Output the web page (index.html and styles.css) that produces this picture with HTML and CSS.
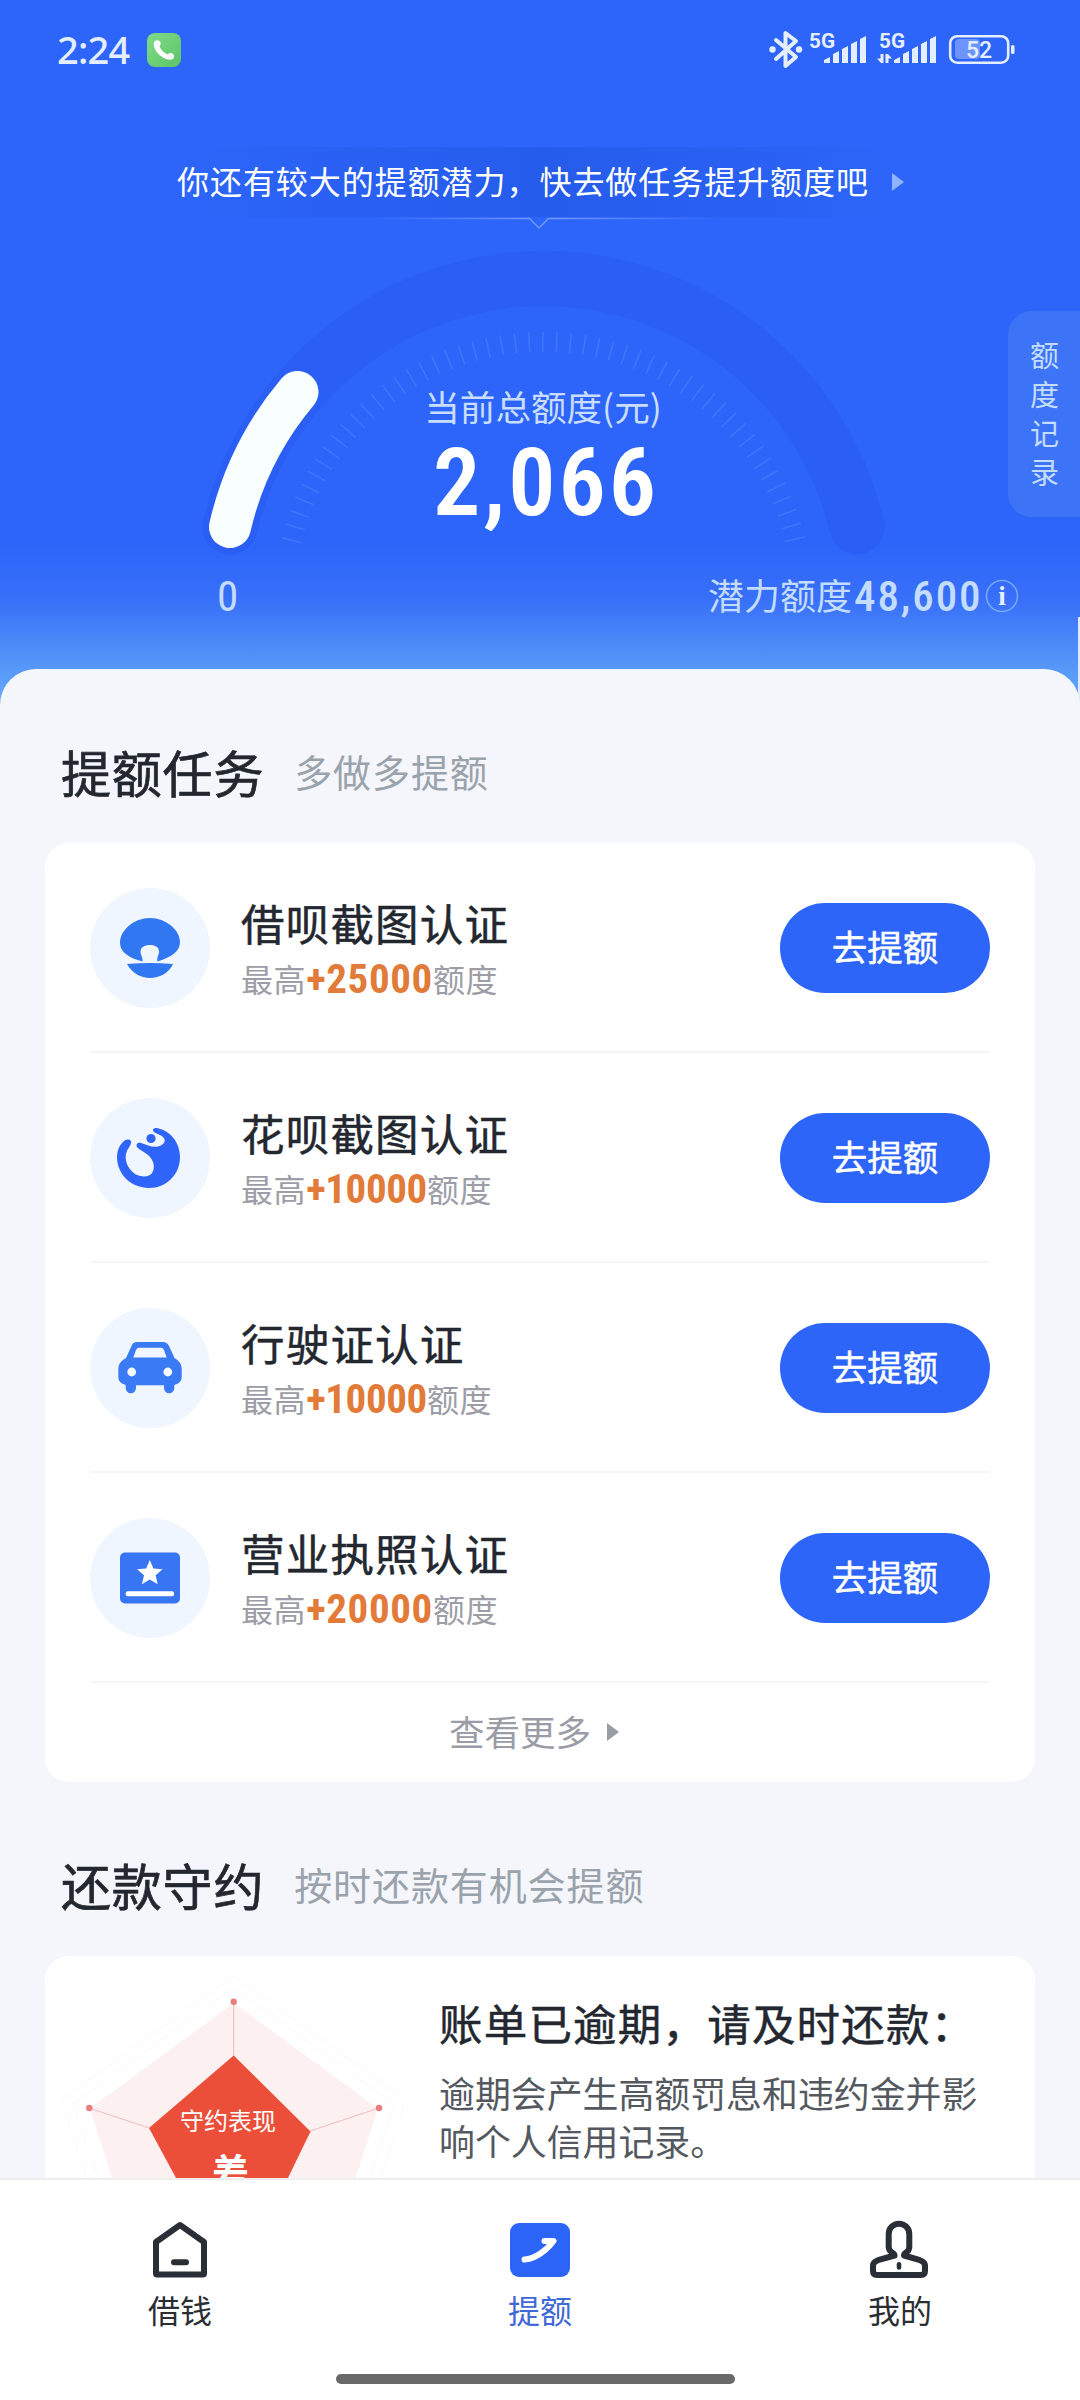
FILE: index.html
```html
<!DOCTYPE html>
<html lang="zh-CN">
<head>
    <meta charset="UTF-8">
    <meta name="viewport" content="width=device-width, initial-scale=1.0">
    <title>提额</title>
    <link rel="stylesheet" href="styles.css">
</head>
<body>
    <div class="content">
        <header class="hero">
            <div class="statusbar">
                <span class="time">2:24</span>
                <svg class="call" viewBox="0 0 34 34">
                    <defs>
                        <linearGradient id="green" x1="0" y1="0" x2="1" y2="1">
                            <stop offset="0" stop-color="#7fdc8a"/>
                            <stop offset="1" stop-color="#5cc466"/>
                        </linearGradient>
                    </defs>
                    <rect width="34" height="34" rx="8" fill="url(#green)"/>
                    <path d="M7 9 C8 7 11 6.500 13 8.500 C14.500 11 13 12.500 12.500 13.500 C14 17 17 20 20.500 21.500 C22 20 24 19.500 26 21 C28 22.500 27 25.500 25 26.500 C16 28 5 17 7 9Z" fill="#fff"/>
                </svg>
                <svg class="signals" viewBox="0 0 250 40">
                    <g fill="none" stroke="#e4eeff" stroke-width="4" stroke-linejoin="round" stroke-linecap="round">
                        <path d="M8 11 L28 28 L17.500 37 V4 L28 12 L8 30"/>
                    </g>
                    <g fill="#e4eeff">
                        <circle cx="4.500" cy="20.500" r="3.200"/>
                        <circle cx="31" cy="20.500" r="3.200"/>
                        <text class="net" x="41" y="19" textLength="26" lengthAdjust="spacingAndGlyphs">5G</text>
                        <path d="M56 34 V31 L62 28 V34Z M65 34 V25 L71 22 V34Z M74 34 V20 L80 17 V34Z M83 34 V15 L89 12 V34Z M92 34 V10 L98 7 V34Z"/>
                        <text class="net" x="111" y="19" textLength="26" lengthAdjust="spacingAndGlyphs">5G</text>
                        <path d="M126 34 V31 L132 28 V34Z M135 34 V25 L141 22 V34Z M144 34 V20 L150 17 V34Z M153 34 V15 L159 12 V34Z M162 34 V10 L168 7 V34Z"/>
                        <path d="M112.500 25 H115.500 V34 H113 L109 29.500 H112.500Z M117.500 25 H120 L124 29.500 H120.500 V34 H117.500Z"/>
                        <rect x="187" y="10" width="25" height="20" rx="4" opacity=".35"/>
                        <rect x="243" y="16" width="3.500" height="9" rx="1.500"/>
                        <text class="level" x="198" y="29">52</text>
                    </g>
                    <rect x="182.200" y="7.200" width="58" height="26.500" rx="7" fill="none" stroke="#e4eeff" stroke-width="2.600"/>
                </svg>
            </div>

            <div class="tip">
                <span>你还有较大的提额潜力，快去做任务提升额度吧</span>
                <i class="arrow"></i>
            </div>

            <svg class="gauge" viewBox="0 217 1080 343">
                <defs>
                    <linearGradient id="fade" gradientUnits="userSpaceOnUse" x1="370" y1="0" x2="720" y2="0">
                        <stop offset="0" stop-color="#8fb4ff" stop-opacity="0"/>
                        <stop offset=".5" stop-color="#8fb4ff" stop-opacity=".7"/>
                        <stop offset="1" stop-color="#8fb4ff" stop-opacity="0"/>
                    </linearGradient>
                </defs>
                <path d="M370 218.500 H529.500 L539 228 L548.500 218.500 H720" fill="none" stroke="url(#fade)" stroke-width="1.300"/>
                <path class="track" d="M230 527 A322 322 0 0 1 857 527"/>
                <path class="ticks" d="M291.500 541 A259 259 0 0 1 795.500 541"/>
                <path class="value" d="M230 527 A322 322 0 0 1 297.500 392"/>
                <text class="gauge-label" x="543" y="421" text-anchor="middle">当前总额度(元)</text>
                <text class="gauge-number" x="433" y="515" textLength="223" lengthAdjust="spacing">2,066</text>
            </svg>

            <div class="range">
                <span class="zero">0</span>
                <span class="potential">潜力额度</span>
                <span class="amount">48,600</span>
                <svg class="info" viewBox="0 0 34 34">
                    <circle cx="17" cy="17" r="15.500" fill="none" stroke="#78a8fb" stroke-width="1.600"/>
                    <text x="17" y="26" text-anchor="middle">i</text>
                </svg>
            </div>

            <div class="history">额度记录</div>
            <div class="scroll-edge"></div>
        </header>

        <main class="panel">
            <h2>提额任务<small>多做多提额</small></h2>
            <section class="card">
                <div class="task">
                    <svg class="task-icon" viewBox="0 0 120 120" fill="#3277f2">
                        <circle class="disc" cx="60" cy="60" r="60"/>
                        <path d="M30 55 C30 42 44 30 60 30 C76 30 90 42 90 54 C90 63 82 69 67.500 73.500 C66.500 69 69 67 69 64 C69 59 65.500 57 60 57 C54.500 57 50.500 59 50.500 64 C50.500 67 53 69 52.500 73.500 C39 70 30 64 30 55Z"/>
                        <path d="M37 76 Q60 74 83 76 C79 85 69 90 60 90 C51 90 42 85 37 76Z"/>
                    </svg>
                    <div class="task-text">
                        <h3>借呗截图认证</h3>
                        <p>最高<b>+25000</b>额度</p>
                    </div>
                    <button>去提额</button>
                </div>
                <div class="task">
                    <svg class="task-icon" viewBox="0 0 120 120" fill="#2e64fa">
                        <circle class="disc" cx="60" cy="60" r="60"/>
                        <path d="M32 45 C35 41 40 40.500 41 43.500 C41.500 46 39 49 37 53 C33 62 39 73 47 77 C53 79.500 60 78.500 62 75 C65.500 70 64 62 58 57 C55 54 49 52 47 49 C45.500 46 48 44 51 45 C57 47 62 49.500 68 48.500 C73 47.500 75.500 44 74.500 41 C73 37 66 36 63.500 33.500 C62 31 64 29.800 67 30 C81 33 90 45 90 59 C90 77 76 90 59 90 C41 90 27 76 27 59 C27 53 29 48.500 32 45Z"/>
                        <circle cx="61" cy="40.500" r="4.600"/>
                    </svg>
                    <div class="task-text">
                        <h3>花呗截图认证</h3>
                        <p>最高<b class="tight">+10000</b>额度</p>
                    </div>
                    <button>去提额</button>
                </div>
                <div class="task">
                    <svg class="task-icon" viewBox="0 0 120 120" fill="#3a7af5">
                        <circle class="disc" cx="60" cy="60" r="60"/>
                        <path fill-rule="evenodd" d="M47 34 H73 Q77 34 79 38 L84.500 50 Q91.700 54 91.700 61 V69 Q91.700 75 84.300 77 V80 A5.100 5.100 0 0 1 74 80 V77.300 H46 V80 A5.100 5.100 0 0 1 35.700 80 V77 Q28.300 75 28.300 69 V61 Q28.300 54 36 50 L41.500 38 Q43 34 47 34Z M49 39.800 Q47 39.800 46 42 L43.300 49.500 H76.700 L74 42 Q73 39.800 71 39.800Z"/>
                        <circle cx="41.700" cy="64" r="4.400" fill="#f5faff"/>
                        <circle cx="77.800" cy="64" r="4.400" fill="#f5faff"/>
                    </svg>
                    <div class="task-text">
                        <h3>行驶证认证</h3>
                        <p>最高<b class="tight">+10000</b>额度</p>
                    </div>
                    <button>去提额</button>
                </div>
                <div class="task">
                    <svg class="task-icon" viewBox="0 0 120 120" fill="#3875f2">
                        <circle class="disc" cx="60" cy="60" r="60"/>
                        <rect x="30" y="34.500" width="60" height="51" rx="5"/>
                        <path fill="#fff" d="M59.800 42 L63.400 50.500 L72.500 51.300 L65.600 57.300 L67.700 66.300 L59.800 61.500 L51.900 66.300 L54 57.300 L47.100 51.300 L56.200 50.500Z"/>
                        <rect x="35.700" y="73.200" width="48.300" height="5" rx="2" fill="#fff"/>
                    </svg>
                    <div class="task-text">
                        <h3>营业执照认证</h3>
                        <p>最高<b>+20000</b>额度</p>
                    </div>
                    <button>去提额</button>
                </div>
                <div class="more">查看更多<i class="arrow"></i></div>
            </section>

            <h2>还款守约<small>按时还款有机会提额</small></h2>
            <section class="card credit">
                <svg class="radar" viewBox="0 0 360 360">
                    <g fill="none" stroke="#fefafa" stroke-width="1.500">
                        <path d="M188.700 32 L349 148 L288 332 H90 L28 148Z"/>
                        <path d="M188.700 20 L361 144 L296 342 H82 L16 144Z"/>
                    </g>
                    <path d="M188.700 47 L333 152.500 L278 322 H99 L45 152.500Z" fill="#fdf0f0"/>
                    <path d="M188.700 46 V100 M44.300 152 L104 172 M334 152 L265 175" stroke="#f0bcbc" stroke-width="1" fill="none"/>
                    <path d="M188.700 99.500 L265.500 175.500 L226 257 H150 L104 172Z" fill="#eb4f3a"/>
                    <g fill="#e87f7f">
                        <circle cx="188.700" cy="45.700" r="3.200"/>
                        <circle cx="44.300" cy="152" r="3.200"/>
                        <circle cx="334" cy="152" r="3.200"/>
                    </g>
                    <text class="radar-label" x="183" y="174" text-anchor="middle">守约表现</text>
                    <text class="radar-grade" x="185.500" y="230" text-anchor="middle">差</text>
                </svg>
                <div class="credit-text">
                    <h3>账单已逾期，请及时还款：</h3>
                    <p>逾期会产生高额罚息和违约金并影响个人信用记录。</p>
                </div>
            </section>
        </main>
    </div>

    <nav class="tabbar">
        <a class="tab">
            <svg viewBox="0 0 60 60" fill="none" stroke="#2a2e36" stroke-width="6" stroke-linejoin="round" stroke-linecap="round">
                <path d="M30 5 L54 22 V53.500 Q54 54.500 53 54.500 H7 Q6 54.500 6 53.500 V22Z"/>
                <path d="M24 42.300 H36"/>
            </svg>
            借钱
        </a>
        <a class="tab active">
            <svg viewBox="0 0 60 60">
                <rect y="3" width="60" height="54" rx="9" fill="#2d64f8"/>
                <path d="M14.500 39.500 C25 39 36 31 43.500 21 H34.500" fill="none" stroke="#fff" stroke-width="6" stroke-linecap="round" stroke-linejoin="round"/>
            </svg>
            提额
        </a>
        <a class="tab">
            <svg viewBox="0 0 60 60" fill="none" stroke="#2a2e36" stroke-width="6" stroke-linejoin="round" stroke-linecap="round">
                <path d="M24.500 35.500 C25 32.500 18.700 33 18.700 27 V14 A10.300 10.300 0 0 1 39.300 14 V27 C39.300 33 33.500 32.500 34 35.500 L50 40.200 Q55 42 55 45.500 V51 Q55 55 51 55 H7 Q3 55 3 51 V45.500 Q3 42 8 40.200 L24.500 35.500"/>
                <path d="M29 44.300 V47.500" stroke-width="4.500"/>
            </svg>
            我的
        </a>
        <div class="home-bar"></div>
    </nav>
</body>
</html>
```
FILE: styles.css
```css
* {
    box-sizing: border-box;
    margin: 0;
    padding: 0;
}
body {
    width: 1080px;
    height: 2400px;
    overflow: hidden;
    display: flex;
    flex-direction: column;
    font-family: "Noto Sans CJK SC", sans-serif;
    background: #fff;
    color: #23272f;
}
svg {
    display: block;
    flex: none;
}
.content {
    flex: 1;
    min-height: 0;
    overflow: hidden;
}

/* blue top area */
.hero {
    position: relative;
    height: 710px;
    background: linear-gradient(#2d65fa 0, #2d65fa 545px, #3870f8 600px, #4a88f8 640px, #5698f8 668px, #66aefc 710px);
}
.statusbar {
    display: flex;
    align-items: center;
    height: 100px;
    padding: 0 62px 0 57px;
    color: #e4eeff;
}
.time {
    font: 500 38px/40px "Noto Sans", sans-serif;
    letter-spacing: -0.8px;
    width: 90px;
    margin-top: -2px;
}
.call {
    width: 34px;
    height: 34px;
}
.signals {
    width: 250px;
    height: 40px;
    margin-left: auto;
    margin-top: -2px;
}
.net {
    font: 700 20px Roboto, sans-serif;
}
.level {
    font: 500 23px Roboto, sans-serif;
}
.tip {
    display: flex;
    align-items: center;
    width: 734px;
    height: 70px;
    margin: 47px 0 0 177px;
    background: linear-gradient(90deg, rgba(35, 88, 228, 0), rgba(35, 88, 228, .7) 50%, rgba(35, 88, 228, 0));
    color: #fff;
    font-size: 32px;
    letter-spacing: 0.95px;
    white-space: nowrap;
}
.tip span {
    padding-bottom: 4px;
}
.arrow {
    width: 0;
    height: 0;
    border: 9px solid transparent;
    border-left: 12px solid currentColor;
    border-right: 0;
}
.tip .arrow {
    margin-left: 23px;
    color: #8fb3fd;
}
.gauge {
    width: 1080px;
    height: 343px;
}
.track {
    fill: none;
    stroke: #2a5ef4;
    stroke-width: 55;
    stroke-linecap: round;
}
.ticks {
    fill: none;
    stroke: #4b7ffb;
    stroke-width: 20;
    stroke-dasharray: 1.6 12.2;
    opacity: .6;
}
.value {
    fill: none;
    stroke: #f8fffe;
    stroke-width: 42;
    stroke-linecap: round;
}
.gauge-label {
    font-size: 35.6px;
    fill: #c8ddff;
}
.gauge-number {
    font: 600 94px Roboto, sans-serif;
    font-stretch: 75%;
    fill: #fff;
}
.range {
    display: flex;
    align-items: center;
    height: 72px;
    padding: 0 61px 0 217px;
    color: #c3dcff;
}
.zero {
    font: 400 43px/44px Roboto, sans-serif;
    font-stretch: 75%;
    margin-right: auto;
}
.potential {
    font-size: 36px;
    line-height: 44px;
    margin-top: -4px;
    margin-right: 2px;
}
.amount {
    font: 500 43px/44px Roboto, sans-serif;
    font-stretch: 75%;
    letter-spacing: 1.9px;
    width: 126px;
}
.info {
    width: 34px;
    height: 34px;
    margin-left: 5px;
}
.info text {
    font: 700 27px "Liberation Serif", serif;
    fill: #e6f0ff;
}
.history {
    position: absolute;
    top: 311px;
    right: 0;
    width: 72px;
    height: 206px;
    padding: 24px 20px 0 22px;
    border-radius: 24px 0 0 24px;
    background: #3d74f7;
    color: #c3dcff;
    font-size: 29px;
    line-height: 39px;
}
.scroll-edge {
    position: absolute;
    top: 617px;
    right: 0;
    width: 2px;
    height: 90px;
    background: #dfe9fb;
}

/* content sheet */
.panel {
    position: relative;
    margin-top: -41px;
    height: 1600px;
    padding: 38px 45px 0;
    border-radius: 36px 36px 0 0;
    background: #f4f6fb;
}
h2 {
    display: flex;
    align-items: center;
    height: 136px;
    padding-left: 16px;
    padding-bottom: 8px;
    font-size: 50px;
    font-weight: 400;
    letter-spacing: 0.8px;
    line-height: 60px;
    -webkit-text-stroke: 0.7px currentColor;
}
h2 small {
    margin-left: 30px;
    font-size: 38px;
    letter-spacing: 0.9px;
    color: #9aa2ac;
    -webkit-text-stroke: 0;
}
.card {
    padding: 0 45px;
    border-radius: 24px;
    background: #fff;
}
.task {
    display: flex;
    align-items: center;
    height: 210px;
    padding-top: 2px;
    border-bottom: 2px solid #f4f5f6;
}
.task-icon {
    width: 120px;
    height: 120px;
}
.disc {
    fill: #eff6ff;
}
.task-text {
    flex: 1;
    padding: 6px 0 0 31px;
}
h3 {
    font-size: 43.5px;
    font-weight: 400;
    line-height: 54px;
    letter-spacing: 1.2px;
    white-space: nowrap;
    -webkit-text-stroke: 0.5px currentColor;
}
.task p {
    display: flex;
    align-items: center;
    height: 56px;
    font-size: 32px;
    letter-spacing: 0.6px;
    color: #9c9da6;
}
.task b {
    font: 700 41px/56px Roboto, sans-serif;
    font-stretch: 75%;
    letter-spacing: 0.6px;
    padding: 2px 0 0 0;
    color: #e27a38;
}
.task .tight {
    letter-spacing: -0.4px;
}
.task button {
    width: 210px;
    height: 90px;
    padding-bottom: 5px;
    border: none;
    border-radius: 45px;
    background: #2d65f8;
    color: #fff;
    font-family: inherit;
    font-size: 35.5px;
    -webkit-text-stroke: 0.5px currentColor;
    cursor: pointer;
}
.more {
    display: flex;
    align-items: center;
    justify-content: center;
    height: 99px;
    padding: 0 12px 4px 0;
    font-size: 35.5px;
    color: #9a9ca6;
}
.more .arrow {
    margin-left: 16px;
    margin-top: 2px;
}
.card + h2 {
    margin-top: 38px;
}
.credit {
    display: flex;
    height: 400px;
    padding: 0;
}
.radar {
    width: 360px;
    height: 360px;
}
.radar-label {
    font-size: 24px;
    fill: #fff;
}
.radar-grade {
    font-size: 37px;
    font-weight: 700;
    fill: #fff;
}
.credit-text {
    padding: 40px 45px 0 34px;
}
.credit-text p {
    margin-top: 18px;
    font-size: 35.9px;
    line-height: 48px;
    color: #54595f;
}

/* bottom navigation */
.tabbar {
    position: relative;
    display: flex;
    flex: none;
    height: 222px;
    border-top: 2px solid #eeeeee;
    background: #fff;
}
.tab {
    display: flex;
    flex: 1;
    flex-direction: column;
    align-items: center;
    padding-top: 40px;
    font-size: 32px;
    line-height: 44px;
    color: #2a2e33;
}
.tab svg {
    width: 60px;
    height: 60px;
    margin-bottom: 7px;
}
.tab.active {
    color: #3f69d6;
}
.home-bar {
    position: absolute;
    left: 336px;
    bottom: 16px;
    width: 399px;
    height: 10px;
    border-radius: 5px;
    background: #696969;
}
```
